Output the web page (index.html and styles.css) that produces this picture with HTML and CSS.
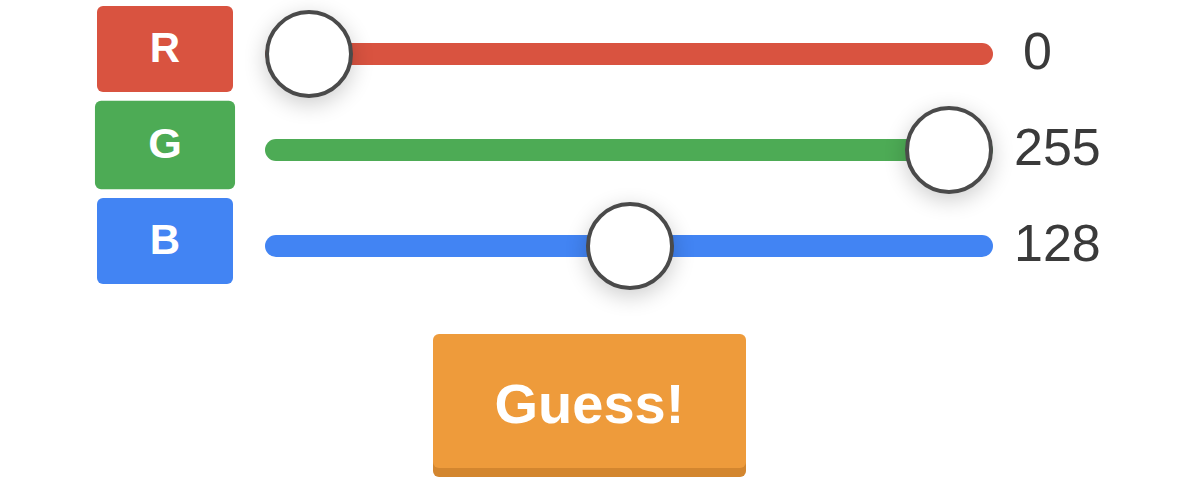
FILE: index.html
```html
<!DOCTYPE html>
<html lang="en">
<head>
<meta charset="utf-8">
<title>Guess the colour</title>
<link rel="stylesheet" href="styles.css">
</head>
<body>
<main class="game">
  <section class="sliders">
    <div class="row">
      <div class="label label--red">R</div>
      <div class="slider">
        <div class="track track--red">
          <div class="thumb" style="left: 0px"></div>
        </div>
      </div>
      <div class="value value--single">0</div>
    </div>
    <div class="row">
      <div class="label label--green label--active">G</div>
      <div class="slider">
        <div class="track track--green">
          <div class="thumb" style="left: 640px"></div>
        </div>
      </div>
      <div class="value">255</div>
    </div>
    <div class="row">
      <div class="label label--blue">B</div>
      <div class="slider">
        <div class="track track--blue">
          <div class="thumb" style="left: 321px"></div>
        </div>
      </div>
      <div class="value">128</div>
    </div>
  </section>
  <div class="actions">
    <button class="guess">Guess!</button>
  </div>
</main>
</body>
</html>
```
FILE: styles.css
```css
html, body {
  margin: 0;
  padding: 0;
  background: #ffffff;
}

body {
  width: 1179px;
  height: 486px;
  overflow: hidden;
  font-family: "Liberation Sans", Arial, Helvetica, sans-serif;
}

.game {
  padding-top: 6px;
}

.sliders {
  display: flex;
  flex-direction: column;
  gap: 10px;
  padding-left: 97px;
}

.row {
  display: flex;
  align-items: center;
  height: 86px;
}

.label {
  width: 136px;
  height: 86px;
  padding-bottom: 3px;
  box-sizing: border-box;
  border-radius: 6px;
  display: flex;
  align-items: center;
  justify-content: center;
  color: #ffffff;
  font-weight: bold;
  font-size: 42px;
  line-height: 1;
  flex: none;
}

.label--red { background: #d95340; }
.label--green { background: #4dab55; }
.label--blue { background: #4284f3; }

.label--active {
  transform: scale(1.03);
}

.slider {
  margin-left: 32px;
  width: 728px;
  height: 86px;
  padding-top: 10px;
  box-sizing: border-box;
  display: flex;
  align-items: center;
  flex: none;
}

.track {
  position: relative;
  width: 100%;
  height: 22px;
  border-radius: 11px;
}

.track--red { background: #d95340; }
.track--green { background: #4dab55; }
.track--blue { background: #4284f3; }

.thumb {
  position: absolute;
  top: 50%;
  width: 88px;
  height: 88px;
  margin-top: -44px;
  box-sizing: border-box;
  border: 4px solid #4a4a4a;
  border-radius: 50%;
  background: #ffffff;
  box-shadow: 0 6px 22px rgba(0, 0, 0, 0.2);
}

.value {
  margin-left: 21px;
  padding-top: 4px;
  font-size: 52px;
  line-height: 1;
  color: #3a3a3a;
}

.value--single {
  margin-left: 30px;
}

.actions {
  display: flex;
  justify-content: center;
  margin-top: 50px;
}

.guess {
  width: 313px;
  height: 134px;
  border: none;
  border-radius: 6px;
  background: #ee9b3b;
  box-shadow: 0 9px 0 #d3862f;
  color: #ffffff;
  font-family: "Liberation Sans", Arial, Helvetica, sans-serif;
  font-weight: bold;
  font-size: 56px;
  line-height: 1;
  padding: 5px 0 0;
  cursor: pointer;
}
```
